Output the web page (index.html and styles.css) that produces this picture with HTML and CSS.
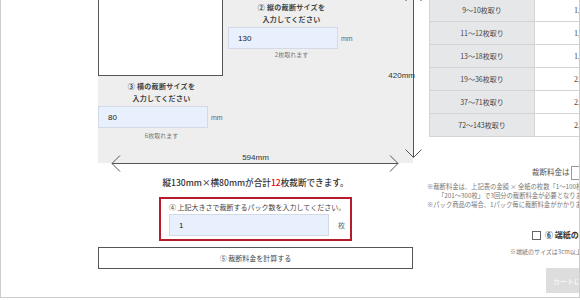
FILE: index.html
```html
<!DOCTYPE html>
<html lang="ja">

<head>
  <meta charset="UTF-8">
  <meta name="viewport" content="width=device-width, initial-scale=1.0">
  <title>裁断サイズ計算</title>
  <link rel="stylesheet" href="styles.css">
</head>

<body>
  <div class="frame">
    <div class="calc">
      <div class="sheet">
        <div class="sheet-top">
          <div class="piece"></div>
          <div class="size-field">
            <p class="field-label">② 縦の裁断サイズを<br>入力してください</p>
            <div class="field-row">
              <input type="text" class="field-input" value="130">
              <span class="unit">mm</span>
            </div>
            <p class="field-note">2枚取れます</p>
          </div>
        </div>
        <div class="size-field size-field-w">
          <p class="field-label">③ 横の裁断サイズを<br>入力してください</p>
          <div class="field-row">
            <input type="text" class="field-input" value="80">
            <span class="unit">mm</span>
          </div>
          <p class="field-note">6枚取れます</p>
        </div>

        <!-- dimension arrows -->
        <svg class="dims" width="330" height="175" viewBox="0 0 330 175">
          <line x1="315.5" y1="-8" x2="315.5" y2="157" />
          <polyline points="307.5,1 315.5,-7 323.5,1" />
          <polyline points="307.5,149.5 315.5,157.5 323.5,149.5" />
          <line x1="14" y1="163.5" x2="300" y2="163.5" />
          <polyline points="22,155.5 14,163.5 22,171.5" />
          <polyline points="292,155.5 300,163.5 292,171.5" />
        </svg>
        <span class="dim-label dim-h">420mm</span>
        <span class="dim-label dim-w">594mm</span>
      </div>

      <p class="result">縦130mm×横80mmが合計<span class="count">12</span>枚裁断できます。</p>

      <div class="pack-box">
        <p class="pack-label">④ 上記大きさで裁断するパック数を入力してください。</p>
        <div class="field-row">
          <input type="text" class="field-input pack-input" value="1">
          <span class="unit pack-unit">枚</span>
        </div>
      </div>

      <button type="button" class="calc-btn">⑤ 裁断料金を計算する</button>
    </div>

    <div class="side">
      <table class="price-table">
        <tr><td>9～10枚取り</td><td>1,100円</td></tr>
        <tr><td>11～12枚取り</td><td>1,320円</td></tr>
        <tr><td>13～18枚取り</td><td>1,650円</td></tr>
        <tr><td>19～36枚取り</td><td>2,200円</td></tr>
        <tr><td>37～71枚取り</td><td>2,750円</td></tr>
        <tr><td>72～143枚取り</td><td>2,970円</td></tr>
      </table>

      <p class="fee">裁断料金は <span class="fee-box"></span></p>

      <p class="notes">
        <span>※裁断料金は、上記表の金額 × 全紙の枚数「1～100枚」で1回分、「101～200枚」で2回分、</span>
        <span class="indent">「201～300枚」で3回分の裁断料金が必要となります。</span>
        <span>※パック商品の場合、1パック毎に裁断料金がかかります。</span>
      </p>

      <label class="edge"><span class="check"></span>⑥ 端紙の受け取りを希望する</label>
      <p class="edge-note">※端紙のサイズは3cm以上のものに限ります。</p>

      <button type="button" class="cart-btn">カートに入れる</button>
    </div>
  </div>
</body>

</html>
```

FILE: styles.css
```css
body {
  margin: 0;
  font-family: "Noto Sans CJK JP", "Noto Sans", sans-serif;
  color: #333;
  background: #fff;
}

p {
  margin: 0;
}

.frame {
  width: 580px;
  height: 298px;
  box-sizing: border-box;
  border: 1px solid #ccc;
  border-top: none;
  padding-left: 97px;
  display: flex;
  gap: 16px;
  overflow: hidden;
}

/* left: cutting diagram */
.calc {
  width: 315px;
  flex-shrink: 0;
  display: flex;
  flex-direction: column;
  align-items: center;
}

.sheet {
  position: relative;
  width: 315px;
  height: 163px;
  background: #eee;
}

.sheet-top {
  display: flex;
}

.piece {
  width: 125px;
  height: 76px;
  box-sizing: border-box;
  background: #fff;
  border: 1px solid #555;
  border-top: none;
}

.size-field {
  width: 127px;
  margin-left: 5px;
  padding-top: 1px;
  text-align: center;
}

.size-field-w {
  margin-left: 0;
  margin-top: 3px;
}

.field-label {
  font-size: 7px;
  line-height: 12px;
  font-weight: 700;
  letter-spacing: 0.3px;
  color: #444;
}

.field-row {
  display: flex;
  align-items: center;
  margin-top: 2px;
}

.field-input {
  width: 110px;
  height: 22px;
  box-sizing: border-box;
  margin: 0;
  padding: 0 0 0 9px;
  border: 1px solid #d3dae6;
  background: #e8f0fe;
  font-family: "Liberation Sans", sans-serif;
  font-size: 8px;
  color: #222;
  outline: none;
}

.unit {
  margin-left: 3px;
  font-family: "Liberation Sans", sans-serif;
  font-size: 7px;
  color: #666;
}

.field-note {
  font-size: 6px;
  line-height: 9px;
  margin-top: 1px;
  color: #777;
}

.size-field-w .field-note {
  margin-top: 3px;
}

.dims {
  position: absolute;
  left: 0;
  top: 0;
  overflow: visible;
  fill: none;
  stroke: #555;
  stroke-width: 1;
}

.dim-label {
  position: absolute;
  font-family: "Liberation Sans", sans-serif;
  font-size: 8px;
  line-height: 10px;
  color: #333;
}

.dim-h {
  right: -2px;
  top: 71px;
}

.dim-w {
  left: 0;
  right: 0;
  top: 153px;
  text-align: center;
}

.result {
  margin-top: 12px;
  font-size: 8.6px;
  line-height: 14px;
  font-weight: 500;
  color: #333;
}

.count {
  color: #e60012;
}

.pack-box {
  width: 193px;
  box-sizing: border-box;
  margin-top: 8px;
  padding: 3px 0 3px 8px;
  border: 2px solid #b71c2c;
}

.pack-label {
  font-size: 7px;
  line-height: 10px;
  color: #444;
}

.pack-input {
  width: 160px;
}

.pack-unit {
  margin-left: 9px;
  font-family: "Noto Sans CJK JP", sans-serif;
}

.calc-btn {
  width: 100%;
  height: 22px;
  margin-top: 6px;
  border: 1px solid #555;
  background: #fff;
  font-family: "Noto Sans CJK JP", sans-serif;
  font-size: 7px;
  color: #444;
  padding: 0;
}

/* right: price table and options */
.side {
  width: 240px;
  flex-shrink: 0;
  white-space: nowrap;
}

.price-table {
  border-collapse: collapse;
  margin-top: -2px;
  font-size: 7px;
  color: #444;
}

.price-table tr {
  height: 23px;
}

.price-table td {
  width: 104px;
  padding: 0;
  text-align: center;
  border: 1px solid #d4d4d4;
}

.price-table td:first-child {
  background: #e6e7e9;
}

.price-table td:last-child {
  font-family: "Liberation Serif", serif;
  font-size: 8px;
}

.fee {
  margin-top: 29px;
  padding-left: 103px;
  font-size: 7.5px;
  line-height: 12px;
  color: #555;
}

.fee-box {
  display: inline-block;
  width: 60px;
  height: 12px;
  vertical-align: middle;
  border: 1px solid #999;
}

.notes {
  margin: 2px 0 0 -2px;
  font-size: 6.3px;
  line-height: 9px;
  color: #777;
}

.notes span {
  display: block;
}

.notes .indent {
  padding-left: 11px;
}

.edge {
  display: flex;
  align-items: center;
  margin-top: 20px;
  padding-left: 103px;
  font-size: 8px;
  line-height: 12px;
  font-weight: 700;
  color: #333;
}

.check {
  width: 7px;
  height: 7px;
  margin-right: 4px;
  border: 1px solid #666;
  background: #fff;
}

.edge-note {
  margin-top: 6px;
  padding-left: 81px;
  font-size: 6px;
  line-height: 10px;
  color: #777;
}

.cart-btn {
  display: block;
  width: 100px;
  height: 25px;
  margin: 11px 0 0 117px;
  padding: 0 0 0 7px;
  text-align: left;
  border: none;
  background: #ddd;
  color: #fff;
  font-family: "Noto Sans CJK JP", sans-serif;
  font-size: 7px;
}
```
